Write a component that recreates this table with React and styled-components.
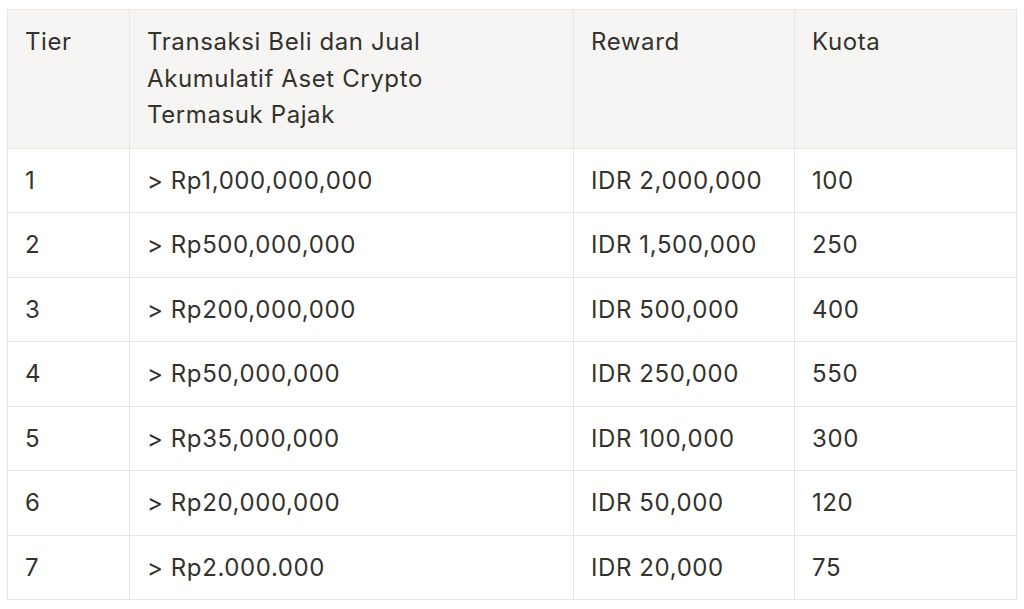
import styled, { createGlobalStyle } from "styled-components";

const GlobalStyle = createGlobalStyle`
  html, body {
    margin: 0;
    padding: 0;
    background: #ffffff;
  }
  body {
    font-family: Inter, "Open Sans", sans-serif;
    color: #34322d;
  }
`;

const Page = styled.div`
  padding: 9px 8px 10px 7px;
`;

const Table = styled.table`
  width: 1009px;
  border-collapse: collapse;
  table-layout: fixed;
  font-size: 24px;
  line-height: 36.5px;
  letter-spacing: 0.6px;
`;

const Head = styled.th`
  background: #f6f5f3;
  font-weight: 400;
  text-align: left;
  vertical-align: top;
  padding: 14px 17px;
  border: 1px solid #e7e6e3;
`;

const Cell = styled.td`
  padding: 14px 17px 13px;
  border: 1px solid #e7e6e3;
  vertical-align: top;
`;

const columns = [
  { label: "Tier", w: 122 },
  { label: "Transaksi Beli dan Jual Akumulatif Aset Crypto Termasuk Pajak", w: 444 },
  { label: "Reward", w: 221 },
  { label: "Kuota", w: 222 },
];

const rows = [
  ["1", "> Rp1,000,000,000", "IDR 2,000,000", "100"],
  ["2", "> Rp500,000,000", "IDR 1,500,000", "250"],
  ["3", "> Rp200,000,000", "IDR 500,000", "400"],
  ["4", "> Rp50,000,000", "IDR 250,000", "550"],
  ["5", "> Rp35,000,000", "IDR 100,000", "300"],
  ["6", "> Rp20,000,000", "IDR 50,000", "120"],
  ["7", "> Rp2.000.000", "IDR 20,000", "75"],
];

export default function App() {
  return (
    <>
      <GlobalStyle />
      <Page>
        <Table>
          <colgroup>
            {columns.map((c) => (
              <col key={c.label} style={{ width: c.w }} />
            ))}
          </colgroup>
          <thead>
            <tr>
              <Head>Tier</Head>
              <Head>
                Transaksi Beli dan Jual
                <br />
                Akumulatif Aset Crypto
                <br />
                Termasuk Pajak
              </Head>
              <Head>Reward</Head>
              <Head>Kuota</Head>
            </tr>
          </thead>
          <tbody>
            {rows.map((r) => (
              <tr key={r[0]}>
                {r.map((v, i) => (
                  <Cell key={i}>{v}</Cell>
                ))}
              </tr>
            ))}
          </tbody>
        </Table>
      </Page>
    </>
  );
}
